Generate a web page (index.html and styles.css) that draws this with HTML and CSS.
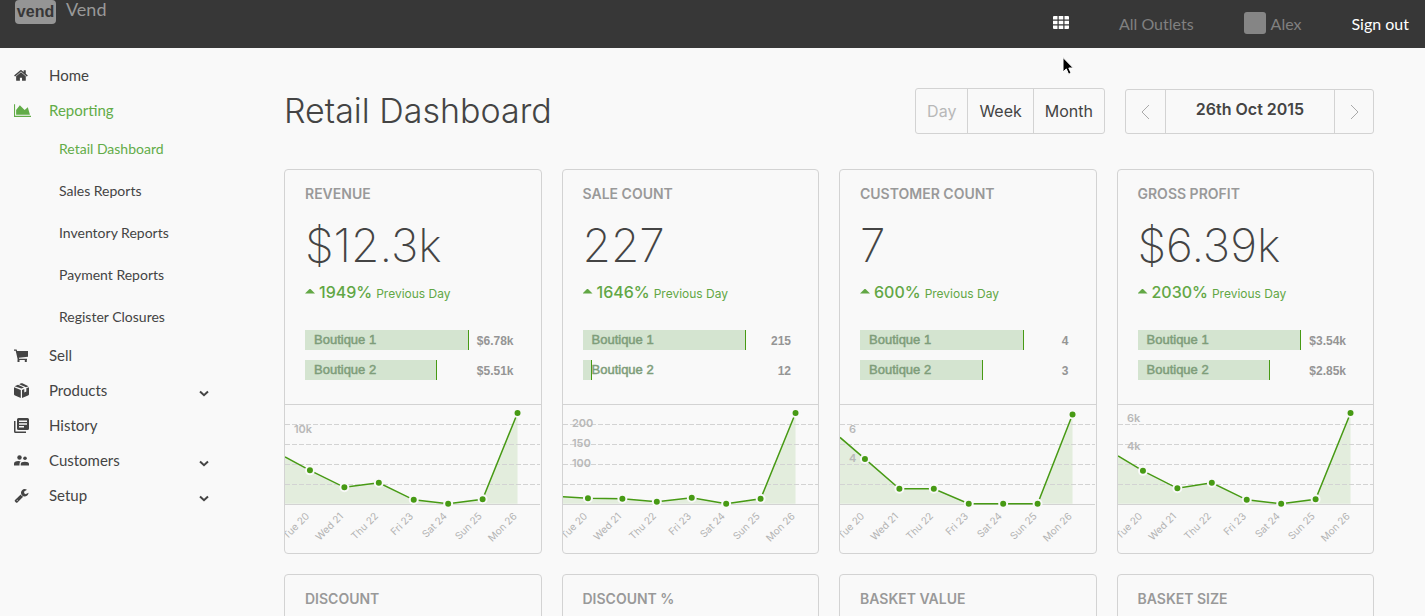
FILE: index.html
```html
<!DOCTYPE html>
<html lang="en">
<head>
<meta charset="utf-8">
<meta name="viewport" content="width=device-width, initial-scale=1">
<title>Retail Dashboard - Vend</title>
<link rel="stylesheet" href="styles.css">
</head>
<body>
<header class="topbar">
  <a class="brand" href="#"><span class="brand-mark">vend</span><span class="brand-name">Vend</span></a>
  <div class="topbar-menu">
    <button class="apps" type="button" aria-label="Apps">
      <svg width="16" height="13" viewBox="0 0 16 13"><path d="M1 0h3.500v3.500H0V1q0-1 1-1zM5.700 0h4.600v3.500H5.700zM11.500 0H15q1 0 1 1v2.500h-4.500zM0 4.700h4.500v3.600H0zM5.700 4.700h4.600v3.600H5.700zM11.500 4.700H16v3.600h-4.500zM0 9.500h4.500V13H1q-1 0-1-1zM5.700 9.500h4.600V13H5.700zM11.500 9.500H16V12q0 1-1 1h-3.500z"/></svg>
      <svg class="pointer" width="14" height="21" viewBox="0 0 14 21"><path d="M2 1.500V16l3.300-3.100 2.300 5.300 2.500-1-2.300-5.200h4.500z"/></svg>
    </button>
    <a class="outlets" href="#">All Outlets</a>
    <a class="user" href="#"><span class="avatar"></span>Alex</a>
    <a class="signout" href="#">Sign out</a>
  </div>
</header>
<div class="layout">
  <nav class="sidebar" aria-label="Main">
    <a class="nav-item" href="#"><svg class="icon" viewBox="0 0 1792 1792"><path d="M1408 992v480q0 26-19 45t-45 19h-384v-384h-256v384h-384q-26 0-45-19t-19-45v-480q0-1 .5-3t.5-3l575-474 575 474q1 2 1 6zm223-69l-62 74q-8 9-21 11h-3q-13 0-21-7l-692-577-692 577q-12 8-24 7-13-2-21-11l-62-74q-8-10-7-23.500t11-21.500l719-599q32-26 76-26t76 26l244 204v-195q0-14 9-23t23-9h192q14 0 23 9t9 23v408l219 182q10 8 11 21.500t-7 23.500z"/></svg>Home</a>
    <a class="nav-item active" href="#"><svg class="icon icon-wide" viewBox="0 0 2048 1792"><path d="M2048 1536v128h-2048v-1536h128v1408h1920zm-384-1024l256 896h-1664v-576l448-576 576 576z"/></svg>Reporting</a>
    <a class="sub-item active" href="#">Retail Dashboard</a>
    <a class="sub-item" href="#">Sales Reports</a>
    <a class="sub-item" href="#">Inventory Reports</a>
    <a class="sub-item" href="#">Payment Reports</a>
    <a class="sub-item" href="#">Register Closures</a>
    <a class="nav-item" href="#"><svg class="icon" viewBox="0 0 15 15"><path d="M0 1.500h2.600l.5 1.400H14v5.800L4.900 9.800l.2 1h7.900v1.300H3.800L1.700 2.700H0zM3.500 11.500h2V14h-2zM10.800 11.500h2V14h-2z"/></svg>Sell</a>
    <button class="nav-item" type="button"><svg class="icon" viewBox="0 0 15 15"><path d="M0 4.200l6.800 2.700V15L1 12.600q-1-.4-1-1.400zM15 4.200v7q0 1-1 1.400L8 15V6.900l2.300-1v3.600l2-.9V5.200zM.6 3.200L4 1.700l6 2.700-2.600 1.200zM5.200 1.200L7 .3q.7-.3 1.400 0l6.100 2.900-2.500 1.100z"/></svg>Products<svg class="chevron" viewBox="0 0 10 7"><path d="M1 1.500l4 3.700 4-3.700"/></svg></button>
    <a class="nav-item" href="#"><svg class="icon" viewBox="0 0 15 15"><path fill-rule="evenodd" d="M4.500 0H13.500Q15 0 15 1.500V10.500Q15 12 13.500 12H4.500Q3 12 3 10.500V1.500Q3 0 4.500 0zM5 2.500v1.400h8V2.500zM5 5.300v1.400h8V5.300zM5 8.100v1.400h5V8.100zM0 3h1.500v10.500H12V15H1.500Q0 15 0 13.500z"/></svg>History</a>
    <button class="nav-item" type="button"><svg class="icon" viewBox="0 0 15 15"><circle cx="5.500" cy="4.500" r="2.200"/><circle cx="11" cy="5.300" r="1.800"/><path d="M0 12.500v-1.700Q0 8 4.500 8q1.200 0 2.300.4-1.300.8-1.300 2.500v1.600zM6.700 12.500V11q0-2.300 4.200-2.300T15 11v1.500z"/></svg>Customers<svg class="chevron" viewBox="0 0 10 7"><path d="M1 1.500l4 3.700 4-3.700"/></svg></button>
    <button class="nav-item" type="button"><svg class="icon" viewBox="0 0 1792 1792"><path d="M448 1472q0-26-19-45t-45-19-45 19-19 45 19 45 45 19 45-19 19-45zm644-420l-682 682q-37 37-90 37-52 0-91-37l-106-108q-38-36-38-90 0-53 38-91l681-681q39 98 114.500 173.500t173.500 114.500zm634-435q0 39-23 106-47 134-164.500 217.500t-258.500 83.500q-185 0-316.500-131.500t-131.500-316.500 131.500-316.500 316.500-131.500q58 0 121.500 16.500t107.500 46.500q16 11 16 28t-16 28l-293 169v224l193 107q5-3 79-48.500t135.500-81 70.500-35.500q15 0 23.500 10t8.500 25z"/></svg>Setup<svg class="chevron" viewBox="0 0 10 7"><path d="M1 1.500l4 3.700 4-3.700"/></svg></button>
  </nav>
  <main class="content">
    <div class="page-head">
      <h1>Retail Dashboard</h1>
      <div class="periods">
        <button type="button" disabled>Day</button>
        <button type="button">Week</button>
        <button type="button">Month</button>
      </div>
      <div class="datepicker">
        <button type="button" aria-label="Previous day"><svg width="9" height="16" viewBox="0 0 9 16"><path d="M8 1L1 8l7 7"/></svg></button>
        <span class="date">26th Oct 2015</span>
        <button type="button" aria-label="Next day"><svg width="9" height="16" viewBox="0 0 9 16"><path d="M1 1l7 7-7 7"/></svg></button>
      </div>
    </div>
    <div class="cards">
      <section class="card">
        <div class="summary">
          <h2>Revenue</h2>
          <p class="figure">$12.3k</p>
          <p class="trend"><span class="up"></span><strong>1949%</strong> Previous Day</p>
          <div class="bars">
            <div class="track"><div class="bar" style="width:100%"></div><span>Boutique 1</span></div><span class="value">$6.78k</span>
            <div class="track"><div class="bar" style="width:81%"></div><span>Boutique 2</span></div><span class="value">$5.51k</span>
          </div>
        </div>
        <svg class="chart" viewBox="0 0 256 148">
          <path class="area" d="M0 52L25 65.500 59.500 82.500 94 78 129 95 163.500 99 198 94.500 233 8V99H0z"/>
          <path class="grid" d="M0 19.500H256M0 39.500H256M0 59.500H256M0 79.500H256"/><path class="axis" d="M0 99.500H256"/>
          <g class="scale"><text x="9" y="28">10k</text></g>
          <path class="line" d="M0 52L25 65.500 59.500 82.500 94 78 129 95 163.500 99 198 94.500 233 8"/>
          <g class="dots"><circle cx="25" cy="65.500" r="4"/><circle cx="59.500" cy="82.500" r="4"/><circle cx="94" cy="78" r="4"/><circle cx="129" cy="95" r="4"/><circle cx="163.500" cy="99" r="4"/><circle cx="198" cy="94.500" r="4"/><circle cx="233" cy="8" r="4"/></g>
          <g class="days"><text transform="translate(25 112) rotate(-45)">Tue 20</text><text transform="translate(59 112) rotate(-45)">Wed 21</text><text transform="translate(94 112) rotate(-45)">Thu 22</text><text transform="translate(129 112) rotate(-45)">Fri 23</text><text transform="translate(163 112) rotate(-45)">Sat 24</text><text transform="translate(198 112) rotate(-45)">Sun 25</text><text transform="translate(233 112) rotate(-45)">Mon 26</text></g>
        </svg>
      </section>
      <section class="card">
        <div class="summary">
          <h2>Sale Count</h2>
          <p class="figure">227</p>
          <p class="trend"><span class="up"></span><strong>1646%</strong> Previous Day</p>
          <div class="bars">
            <div class="track"><div class="bar" style="width:100%"></div><span>Boutique 1</span></div><span class="value">215</span>
            <div class="track"><div class="bar" style="width:6%"></div><span>Boutique 2</span></div><span class="value">12</span>
          </div>
        </div>
        <svg class="chart" viewBox="0 0 256 148">
          <path class="area" d="M0 92L25 93.500 59.500 94 94 97 129 93 163.500 99 198 94 233 8V99H0z"/>
          <path class="grid" d="M0 19.500H256M0 39.500H256M0 59.500H256M0 79.500H256"/><path class="axis" d="M0 99.500H256"/>
          <g class="scale"><text x="9" y="22">200</text><text x="9" y="42">150</text><text x="9" y="62">100</text></g>
          <path class="line" d="M0 92L25 93.500 59.500 94 94 97 129 93 163.500 99 198 94 233 8"/>
          <g class="dots"><circle cx="25" cy="93.500" r="4"/><circle cx="59.500" cy="94" r="4"/><circle cx="94" cy="97" r="4"/><circle cx="129" cy="93" r="4"/><circle cx="163.500" cy="99" r="4"/><circle cx="198" cy="94" r="4"/><circle cx="233" cy="8" r="4"/></g>
          <g class="days"><text transform="translate(25 112) rotate(-45)">Tue 20</text><text transform="translate(59 112) rotate(-45)">Wed 21</text><text transform="translate(94 112) rotate(-45)">Thu 22</text><text transform="translate(129 112) rotate(-45)">Fri 23</text><text transform="translate(163 112) rotate(-45)">Sat 24</text><text transform="translate(198 112) rotate(-45)">Sun 25</text><text transform="translate(233 112) rotate(-45)">Mon 26</text></g>
        </svg>
      </section>
      <section class="card">
        <div class="summary">
          <h2>Customer Count</h2>
          <p class="figure">7</p>
          <p class="trend"><span class="up"></span><strong>600%</strong> Previous Day</p>
          <div class="bars">
            <div class="track"><div class="bar" style="width:100%"></div><span>Boutique 1</span></div><span class="value">4</span>
            <div class="track"><div class="bar" style="width:75%"></div><span>Boutique 2</span></div><span class="value">3</span>
          </div>
        </div>
        <svg class="chart" viewBox="0 0 256 148">
          <path class="area" d="M0 32.500L25 54 59.500 84 94 84 129 99 163.500 99 198 99 233 9.500V99H0z"/>
          <path class="grid" d="M0 19.500H256M0 39.500H256M0 59.500H256M0 79.500H256"/><path class="axis" d="M0 99.500H256"/>
          <g class="scale"><text x="9" y="28">6</text><text x="9" y="57">4</text></g>
          <path class="line" d="M0 32.500L25 54 59.500 84 94 84 129 99 163.500 99 198 99 233 9.500"/>
          <g class="dots"><circle cx="25" cy="54" r="4"/><circle cx="59.500" cy="84" r="4"/><circle cx="94" cy="84" r="4"/><circle cx="129" cy="99" r="4"/><circle cx="163.500" cy="99" r="4"/><circle cx="198" cy="99" r="4"/><circle cx="233" cy="9.500" r="4"/></g>
          <g class="days"><text transform="translate(25 112) rotate(-45)">Tue 20</text><text transform="translate(59 112) rotate(-45)">Wed 21</text><text transform="translate(94 112) rotate(-45)">Thu 22</text><text transform="translate(129 112) rotate(-45)">Fri 23</text><text transform="translate(163 112) rotate(-45)">Sat 24</text><text transform="translate(198 112) rotate(-45)">Sun 25</text><text transform="translate(233 112) rotate(-45)">Mon 26</text></g>
        </svg>
      </section>
      <section class="card">
        <div class="summary">
          <h2>Gross Profit</h2>
          <p class="figure">$6.39k</p>
          <p class="trend"><span class="up"></span><strong>2030%</strong> Previous Day</p>
          <div class="bars">
            <div class="track"><div class="bar" style="width:100%"></div><span>Boutique 1</span></div><span class="value">$3.54k</span>
            <div class="track"><div class="bar" style="width:81%"></div><span>Boutique 2</span></div><span class="value">$2.85k</span>
          </div>
        </div>
        <svg class="chart" viewBox="0 0 256 148">
          <path class="area" d="M0 51L25 66 59.500 83.500 94 78 129 95 163.500 99 198 94.500 233 8V99H0z"/>
          <path class="grid" d="M0 19.500H256M0 39.500H256M0 59.500H256M0 79.500H256"/><path class="axis" d="M0 99.500H256"/>
          <g class="scale"><text x="9" y="17">6k</text><text x="9" y="45">4k</text></g>
          <path class="line" d="M0 51L25 66 59.500 83.500 94 78 129 95 163.500 99 198 94.500 233 8"/>
          <g class="dots"><circle cx="25" cy="66" r="4"/><circle cx="59.500" cy="83.500" r="4"/><circle cx="94" cy="78" r="4"/><circle cx="129" cy="95" r="4"/><circle cx="163.500" cy="99" r="4"/><circle cx="198" cy="94.500" r="4"/><circle cx="233" cy="8" r="4"/></g>
          <g class="days"><text transform="translate(25 112) rotate(-45)">Tue 20</text><text transform="translate(59 112) rotate(-45)">Wed 21</text><text transform="translate(94 112) rotate(-45)">Thu 22</text><text transform="translate(129 112) rotate(-45)">Fri 23</text><text transform="translate(163 112) rotate(-45)">Sat 24</text><text transform="translate(198 112) rotate(-45)">Sun 25</text><text transform="translate(233 112) rotate(-45)">Mon 26</text></g>
        </svg>
      </section>
      <section class="card"><div class="summary"><h2>Discount</h2></div></section>
      <section class="card"><div class="summary"><h2>Discount %</h2></div></section>
      <section class="card"><div class="summary"><h2>Basket Value</h2></div></section>
      <section class="card"><div class="summary"><h2>Basket Size</h2></div></section>
    </div>
  </main>
</div>
</body>
</html>
```

FILE: styles.css
```css
* { box-sizing: border-box; }

body {
  display: flex;
  flex-direction: column;
  height: 100vh;
  margin: 0;
  overflow: hidden;
  background: #f9f9f9;
  color: #444;
  font-family: Inter, "Liberation Sans", sans-serif;
}

a { color: inherit; text-decoration: none; }
button {
  padding: 0;
  border: 0;
  background: none;
  color: inherit;
  font: inherit;
  text-align: left;
}
h1, h2, p { margin: 0; font-weight: inherit; }
svg { fill: currentColor; }

/* Top bar */
.topbar {
  display: flex;
  flex: none;
  justify-content: space-between;
  height: 48px;
  padding: 0 16px 0 15px;
  background: #373737;
  color: #808080;
  font-family: Lato, sans-serif;
  font-size: 16px;
}
.brand { display: flex; gap: 10px; height: 24px; }
.brand-mark {
  width: 41px;
  height: 24px;
  border-radius: 4px;
  background: #959595;
  color: #373737;
  font: bold 16px/24px "Liberation Sans", sans-serif;
  text-align: center;
}
.brand-name { color: #999; font-size: 18px; line-height: 18px; }
.topbar-menu { display: flex; align-items: center; gap: 50px; padding-bottom: 2px; }
.apps { position: relative; display: flex; padding-bottom: 1px; color: #fff; }
.pointer { position: absolute; top: 40px; left: 8px; fill: #000; stroke: #fff; stroke-width: 1; }
.user { display: flex; align-items: center; gap: 5px; }
.avatar { width: 22px; height: 22px; border-radius: 3px; background: #858585; }
.signout { color: #fff; }

/* Sidebar */
.layout { display: flex; flex: 1; min-height: 0; }
.sidebar {
  display: flex;
  flex: 0 0 244px;
  flex-direction: column;
  padding: 10px 35px 0 14px;
  font-family: Lato, sans-serif;
}
.nav-item {
  display: grid;
  grid-template-columns: 35px 1fr 10px;
  align-items: center;
  height: 35px;
  padding-bottom: 2px;
  font-size: 15px;
}
.icon { width: 15px; height: 15px; margin-top: 2px; }
.icon-wide { width: 17px; }
.chevron { width: 10px; height: 7px; margin-top: 8px; fill: none; stroke: currentColor; stroke-width: 2; }
.sub-item { height: 42px; padding-left: 45px; font-size: 14px; line-height: 42px; }
.active { color: #62ac48; }

/* Page head */
.content { flex: 1; min-width: 0; padding: 40px 51px 0 40px; }
.page-head { display: flex; align-items: flex-end; gap: 20px; height: 46px; margin-bottom: 35px; }
h1 { flex: 1; font-size: 34px; font-weight: 300; line-height: 46px; white-space: nowrap; }
.periods, .datepicker { display: flex; border: 1px solid #d3d3d3; border-radius: 3px; }
.periods { height: 46px; font-size: 16px; }
.periods button { padding: 0 11px; }
.periods button:disabled { color: #b8b8b8; }
.periods button + button, .datepicker > * + * { border-left: 1px solid #d3d3d3; }
.datepicker { height: 45px; }
.datepicker button { display: grid; place-items: center; width: 39px; }
.datepicker svg { fill: none; stroke: #aaa; }
.date { width: 169px; font-size: 16px; font-weight: 600; line-height: 38px; text-align: center; }

/* Cards */
.cards { display: grid; grid-template-columns: repeat(4, 1fr); gap: 20px; }
.card { overflow: hidden; border: 1px solid #d3d3d3; border-radius: 4px; }
.summary { height: 234px; padding: 14px 27px 0 20px; }
.summary h2 { color: #999; font-size: 14px; font-weight: 600; line-height: 20px; text-transform: uppercase; }
.figure { margin-top: 13px; font-size: 46px; font-weight: 200; line-height: 56px; }
.trend { display: flex; align-items: baseline; gap: 4px; margin-top: 7px; color: #62a745; font-size: 12px; line-height: 24px; }
.trend strong { font-size: 16px; font-weight: 500; }
.up { align-self: center; width: 10px; height: 5px; margin-bottom: 4px; background: currentColor; clip-path: polygon(50% 0, 100% 100%, 0 100%); }
.bars {
  display: grid;
  grid-template-columns: 1fr 45px;
  gap: 10px 0;
  margin-top: 24px;
  font: 13px/20px "Liberation Sans", sans-serif;
}
.track { display: grid; height: 20px; color: #7e9d7a; -webkit-text-stroke: 0.5px; }
.track > * { grid-area: 1 / 1; }
.track span { padding-left: 9px; }
.bar { height: 20px; border-right: 1px solid #479a14; background: #d4e4d0; }
.value { height: 20px; color: #959595; font-size: 12px; font-weight: 700; line-height: 22px; text-align: right; }

/* Charts */
.chart { display: block; width: 100%; border-top: 1px solid #d3d3d3; }
.area { fill: #4c9a18; fill-opacity: 0.12; }
.grid, .axis { stroke: #d3d3d3; shape-rendering: crispEdges; }
.grid { stroke-dasharray: 5 2; }
.line { fill: none; stroke: #479a14; stroke-width: 1.5; }
.dots { fill: #479a14; stroke: #f9f9f9; stroke-width: 2; }
.scale { fill: #b8b8b8; font-size: 11px; font-weight: 600; }
.days { fill: #b3b3b3; font-size: 10px; text-anchor: end; }
```
